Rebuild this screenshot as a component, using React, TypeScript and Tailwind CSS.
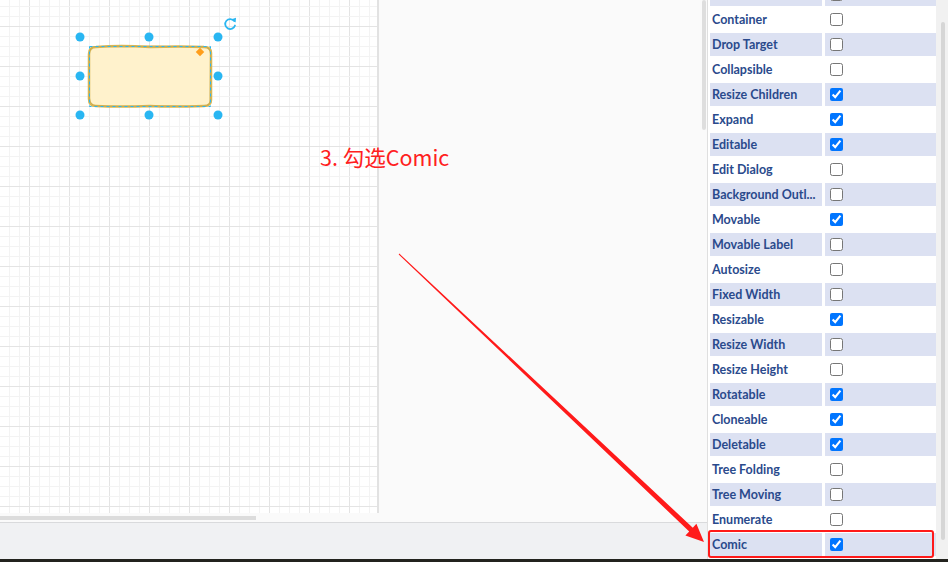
import React from "react";

// property rows, first one is scrolled mostly out of view
const rows: { label: string; checked: boolean }[] = [
  { label: "", checked: false },
  { label: "Container", checked: false },
  { label: "Drop Target", checked: false },
  { label: "Collapsible", checked: false },
  { label: "Resize Children", checked: true },
  { label: "Expand", checked: true },
  { label: "Editable", checked: true },
  { label: "Edit Dialog", checked: false },
  { label: "Background Outl...", checked: false },
  { label: "Movable", checked: true },
  { label: "Movable Label", checked: false },
  { label: "Autosize", checked: false },
  { label: "Fixed Width", checked: false },
  { label: "Resizable", checked: true },
  { label: "Resize Width", checked: false },
  { label: "Resize Height", checked: false },
  { label: "Rotatable", checked: true },
  { label: "Cloneable", checked: true },
  { label: "Deletable", checked: true },
  { label: "Tree Folding", checked: false },
  { label: "Tree Moving", checked: false },
  { label: "Enumerate", checked: false },
  { label: "Comic", checked: true },
];

const CANVAS_W = 377;
const CANVAS_H = 513;

const GridCanvas = () => {
  const xs: number[] = [];
  for (let x = 9; x < CANVAS_W; x += 10) xs.push(x);
  const ys: number[] = [];
  for (let y = 6; y < CANVAS_H; y += 10) ys.push(y);

  return (
    <svg width={CANVAS_W} height={CANVAS_H} className="block">
      <rect width={CANVAS_W} height={CANVAS_H} fill="#ffffff" />
      {xs.map((x) => (
        <line
          key={"v" + x}
          x1={x + 0.5}
          y1={0}
          x2={x + 0.5}
          y2={CANVAS_H}
          stroke={(x - 29) % 40 === 0 ? "#e4e4e4" : "#f3f3f3"}
          strokeWidth={1}
        />
      ))}
      {ys.map((y) => (
        <line
          key={"h" + y}
          x1={0}
          y1={y + 0.5}
          x2={CANVAS_W}
          y2={y + 0.5}
          stroke={(y - 26) % 40 === 0 ? "#e4e4e4" : "#f3f3f3"}
          strokeWidth={1}
        />
      ))}

      {/* sketchy shape */}
      <path
        d="M96 47 Q120 45 150 47 Q180 46 204 47 Q211 47 211 53 L211 100 Q211 106 204 106 Q170 107 150 106 Q120 107 96 106 Q89 106 89 99 L89 54 Q89 47 96 47 Z"
        fill="#fff2cc"
        stroke="#d6b656"
        strokeWidth={2.5}
      />
      <path
        d="M95 46.5 Q125 47.5 152 46 Q185 47 205 46.5 Q210.5 48 210.5 54 L210 101 Q210.5 105.5 203 106.5 Q160 105.5 120 106.5 L97 106 Q89.5 105 89.5 98 L89.5 53 Q90 47 95 46.5 Z"
        fill="none"
        stroke="#c9a84a"
        strokeWidth={1}
        opacity={0.8}
      />
      <rect x={89.5} y={46.5} width={121} height={60} fill="none" stroke="#29b6f2" strokeWidth={1} strokeDasharray="3 3" />

      {/* corner radius handle */}
      <rect x={197} y={49} width={6} height={6} fill="#ff9e1b" transform="rotate(45 200 52)" />

      {/* resize handles */}
      {[
        [80, 37],
        [149, 37],
        [218, 37],
        [80, 76],
        [218, 76],
        [80, 115],
        [149, 115],
        [218, 115],
      ].map(([cx, cy]) => (
        <circle key={cx + "-" + cy} cx={cx} cy={cy} r={4.5} fill="#29b6f2" />
      ))}

      {/* rotate handle */}
      <path d="M234.2 21 A5 5 0 1 0 235 25.5" fill="none" stroke="#29b6f2" strokeWidth={1.8} strokeLinecap="round" />
      <path d="M231.5 19.2 L236 17.8 L235.6 22.6 Z" fill="#29b6f2" />
    </svg>
  );
};

const PropRow = ({ label, checked, blue }: { label: string; checked: boolean; blue: boolean }) => (
  <div className="flex gap-[3px] h-[23px] shrink-0">
    <div
      className={`w-[112px] flex items-center pl-[2px] pt-[2px] overflow-hidden whitespace-nowrap text-[12.5px] font-bold text-[#2a4a8c] ${
        blue ? "bg-[#dce1f2]" : "bg-white"
      }`}
    >
      {label}
    </div>
    <div className={`w-[111px] flex items-center pl-[5px] ${blue ? "bg-[#dce1f2]" : "bg-white"}`}>
      <input type="checkbox" checked={checked} readOnly className="w-[13px] h-[13px]" />
    </div>
  </div>
);

export default function App() {
  return (
    <div className="relative w-[948px] h-[562px] overflow-hidden flex flex-col bg-white font-['Lato','Liberation_Sans',sans-serif]">
      <div className="flex flex-1 min-h-0">
        {/* LEFT: diagram area + footer */}
        <div className="w-[707px] flex flex-col">
          <div className="flex-1 flex bg-[#fafafa] min-h-0">
            <div className="w-[379px] flex flex-col">
              <div className="h-[513px] border-r-2 border-[#e2e2e2] bg-white">
                <GridCanvas />
              </div>
              <div className="h-[4px] mt-[3px] w-[256px] bg-[#dcdcdc]" />
            </div>
            <div className="flex-1" />
            <div className="w-[4px] h-[130px] bg-[#dedede] rounded-full mr-[1px]" />
          </div>
          <div className="h-[37px] border-t border-[#d9dadc] bg-[#f0f1f3]" />
        </div>

        {/* RIGHT: properties panel */}
        <div className="flex-1 flex border-l border-[#dfdfdf] bg-white">
          <div className="flex-1 overflow-hidden pl-[2px]">
            <div className="flex flex-col gap-[2px] mt-[-17px]">
              {rows.map((r, i) => (
                <PropRow key={i} label={r.label} checked={r.checked} blue={i % 2 === 0} />
              ))}
            </div>
          </div>
          <div className="w-[12px] bg-[#f1f1f1] pt-[22px]">
            <div className="w-[4px] h-[518px] ml-[5px] rounded-full bg-[#d6d6d6]" />
          </div>
        </div>
      </div>
      <div className="h-[3px] bg-[#23231e]" />

      {/* annotation overlay */}
      <div className="absolute left-[320px] top-[142px] text-[21.5px] leading-[30px] text-[#ff2020] font-['Noto_Sans_CJK_SC',sans-serif]">
        3. 勾选Comic
      </div>
      <svg className="absolute left-0 top-0 pointer-events-none" width={948} height={562}>
        <polygon
          points="399.3,253.6 692.8,527.7 696.4,523.8 704,542 685.4,535.4 689.2,531.5 398.7,254.4"
          fill="#ff1a1a"
        />
      </svg>
      <div className="absolute left-[708px] top-[530px] w-[226px] h-[28px] border-2 border-[#ff1a1a] rounded-[3px]" />
    </div>
  );
}
